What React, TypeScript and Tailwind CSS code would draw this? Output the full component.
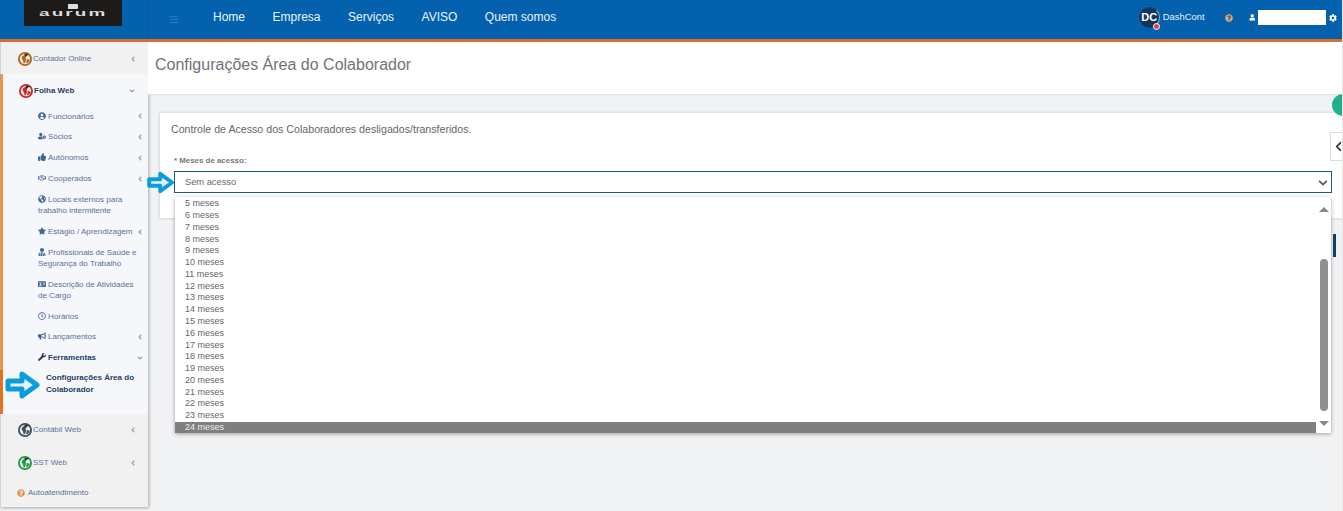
import type { ReactNode } from 'react';
import {
  FaAngleDown,
  FaAngleLeft,
  FaBullhorn,
  FaChevronDown,
  FaChevronLeft,
  FaCog,
  FaGlobeAmericas,
  FaIdCard,
  FaQuestionCircle,
  FaRegClock,
  FaRegHandshake,
  FaStar,
  FaThumbsUp,
  FaUser,
  FaUserCircle,
  FaUserCog,
  FaUserMd,
  FaWrench,
} from 'react-icons/fa';

const navLinks = ['Home', 'Empresa', 'Serviços', 'AVISO', 'Quem somos'];
const months = Array.from({ length: 19 }, (_, i) => i + 5);

const BrandIcon = ({ color }: { color: string }) => (
  <svg viewBox="0 0 20 20" className="mr-px h-[14px] w-[14px] shrink-0">
    <circle cx="10" cy="10" r="8.7" fill="#f6efe6" stroke={color} strokeWidth="2.6" />
    <path d="M5 9c1-4 5-6 9-5-2 1-3 3-3 5 1 3 0 6-3 8 0-3-1-6-3-8z" fill={color} />
    <path d="M12 10l5 1c-1 3-3 5-6 5 1-2 2-4 1-6z" fill={color} />
    <path d="M9 3c2-1 5-1 7 1l-3 1-2 2z" fill="#3a3532" />
  </svg>
);

const FlowArrow = ({ className }: { className: string }) => (
  <svg viewBox="0 0 38 32" className={className}>
    <path
      d="M4 12h14V5l15 11-15 11v-7H4z"
      fill="#e8f3f9"
      stroke="#0a9ddb"
      strokeWidth="5"
      strokeLinejoin="round"
    />
  </svg>
);

const ModuleRow = ({
  icon,
  label,
  open,
  className = 'h-[32px]',
}: {
  icon: string;
  label: string;
  open?: boolean;
  className?: string;
}) => (
  <div className={`flex items-center pl-[17px] pr-[11px] ${className}`}>
    <BrandIcon color={icon} />
    <span className={`text-[8px] ${open ? 'font-bold text-[#1d3f66]' : 'text-[#5a7199]'}`}>{label}</span>
    <span className="ml-auto text-[8px] text-[#9aa0a6]">{open ? <FaAngleDown /> : <FaAngleLeft />}</span>
  </div>
);

const SubRow = ({
  icon,
  children,
  chevron,
  strong,
  tall,
}: {
  icon: ReactNode;
  children: ReactNode;
  chevron?: 'left' | 'down';
  strong?: boolean;
  tall?: boolean;
}) => (
  <div className={`flex items-center pl-[35px] ${tall ? 'h-[32px] pr-[11px]' : 'h-[20.8px] pr-[4px]'}`}>
    <p className={`min-w-0 flex-1 text-[8px] leading-[11.4px] ${strong ? 'font-bold text-[#24405f]' : 'text-[#5a7199]'}`}>
      <span className={`mr-[2px] inline-block align-[-1px] text-[8px] ${strong ? 'text-[#24405f]' : 'text-[#3f6496]'}`}>
        {icon}
      </span>
      {children}
    </p>
    {chevron && (
      <span className="text-[8px] text-[#9aa0a6]">{chevron === 'left' ? <FaAngleLeft /> : <FaAngleDown />}</span>
    )}
  </div>
);

const Sidebar = () => (
  <aside className="flex h-[465px] w-[148px] shrink-0 flex-col border-l border-[#cfd6d4] bg-[#f1f1f2] shadow-[1px_1px_3px_rgba(0,0,0,0.3)]">
    <ModuleRow icon="#b5651d" label="Contador Online" className="h-[32px] pt-[1px]" />
    <section className="relative -ml-px h-[340px] border-l-[3px] border-[#e8954f] bg-[#f6f7fa]">
      <span className="absolute -left-[3px] top-[296px] h-[44px] w-[3px] bg-[#e5701f]" />
      <ModuleRow icon="#c62828" label="Folha Web" open className="-ml-px mr-px h-[32px] pt-[1px]" />
      <SubRow icon={<FaUserCircle />} chevron="left">Funcionários</SubRow>
      <SubRow icon={<FaUserCog />} chevron="left">Sócios</SubRow>
      <SubRow icon={<FaThumbsUp />} chevron="left">Autônomos</SubRow>
      <SubRow icon={<FaRegHandshake />} chevron="left">Cooperados</SubRow>
      <SubRow icon={<FaGlobeAmericas />} tall>
        Locais externos para trabalho intermitente
      </SubRow>
      <SubRow icon={<FaStar />} chevron="left">Estágio / Aprendizagem</SubRow>
      <SubRow icon={<FaUserMd />} tall>
        Profissionais de Saúde e Segurança do Trabalho
      </SubRow>
      <SubRow icon={<FaIdCard />} tall>
        Descrição de Atividades de Cargo
      </SubRow>
      <SubRow icon={<FaRegClock />}>Horários</SubRow>
      <SubRow icon={<FaBullhorn />} chevron="left">Lançamentos</SubRow>
      <SubRow icon={<FaWrench />} chevron="down" strong>
        Ferramentas
      </SubRow>
      <div className="flex h-[32px] items-center pl-[43px] pr-[8px]">
        <p className="text-[8px] font-bold leading-[12px] text-[#24405f]">Configurações Área do Colaborador</p>
      </div>
    </section>
    <ModuleRow icon="#37515f" label="Contábil Web" className="h-[32px]" />
    <ModuleRow icon="#1f9a45" label="SST Web" className="h-[33px] pt-[1px]" />
    <div className="flex h-[28px] items-center gap-[3px] pl-[16px] text-[8px] text-[#5a7199]">
      <FaQuestionCircle className="text-[8px] text-[#e8954f]" />
      Autoatendimento
    </div>
  </aside>
);

const MonthsMenu = () => (
  <div className="absolute left-[175px] top-[197px] flex h-[236px] w-[1156px] bg-white shadow-[0_1px_4px_rgba(0,0,0,0.35)]">
    <ul className="flex min-w-0 flex-1 flex-col justify-end text-[9px] leading-[11.78px] text-[#666]">
      {months.map((m) => (
        <li key={m} className="pl-[10px]">
          {m} meses
        </li>
      ))}
      <li className="h-[11px] bg-[#7f7f7f] pl-[10px] leading-[10px] text-[#eee]">24 meses</li>
    </ul>
    <div className="flex w-[15px] flex-col items-center bg-white pb-[7px] pt-[10px]">
      <span className="h-0 w-0 border-x-[5px] border-b-[5px] border-x-transparent border-b-[#8a8a8a]" />
      <span className="mt-[47px] h-[152px] w-[8px] rounded-full bg-[#8f8f8f]" />
      <span className="mt-auto h-0 w-0 border-x-[5px] border-t-[5px] border-x-transparent border-t-[#8a8a8a]" />
    </div>
  </div>
);

export default function App() {
  return (
    <div className="relative flex h-[511px] w-[1343px] flex-col overflow-hidden border-r border-[#e6e6e6] bg-[#f1f2f4] font-['Liberation_Sans',Arial,sans-serif]">
      <header className="flex h-[42px] shrink-0 border-b-[3px] border-[#dd6f2b] bg-[#0461ad] text-white">
        <div className="flex w-[148px] shrink-0 justify-end border-r border-[#0b5796] pr-[25px]">
          <div className="flex h-[26px] w-[98px] flex-col items-center bg-[#1d1a1a] pt-[4px] text-[#ddd]">
            <span className="h-[5px] w-[10px] rounded-r-[1px] bg-[#ddd]" />
            <span className="mt-[-1px] scale-x-[2.1] text-[9px] font-bold leading-[10px] tracking-[1px]">aurum</span>
          </div>
        </div>
        <div className="flex items-center pb-[5px] pl-[22px]">
          <span className="mt-[4px] flex w-[8px] flex-col gap-[2px]">
            <i className="h-px bg-[#2a7dbf]" />
            <i className="h-px bg-[#2a7dbf]" />
            <i className="h-px bg-[#2a7dbf]" />
          </span>
          <nav className="ml-[35px] flex gap-[27.5px] text-[12px] text-[#eaf4fb]">
            {navLinks.map((link) => (
              <a key={link}>{link}</a>
            ))}
          </nav>
        </div>
        <div className="ml-auto flex items-center pb-[4px] pr-[5px]">
          <div className="relative flex h-[21px] w-[21px] items-center justify-center rounded-full border border-[#1a3d5f] border-r-[#6cc3d8] bg-[#12365a] text-[11px] font-bold">
            DC
            <span className="absolute -bottom-[3px] -right-[1px] h-[7px] w-[7px] rounded-full border border-white bg-[#d64545]" />
          </div>
          <span className="ml-[3px] text-[9.4px] font-medium text-[#e4f1fa]">DashCont</span>
          <FaQuestionCircle className="ml-[20px] text-[8px] text-[#e3a26f]" />
          <FaUser className="ml-[16px] text-[6.5px]" />
          <span className="ml-[3px] h-[15px] w-[68px] bg-white" />
          <FaCog className="ml-[3px] text-[8px]" />
        </div>
      </header>

      <div className="flex min-h-0 flex-1">
        <Sidebar />
        <main className="flex min-w-0 flex-1 flex-col">
          <div className="flex h-[53px] shrink-0 border-b border-[#dfe1e4] bg-white pl-[7px] pt-[13px]">
            <h1 className="text-[16px] leading-[20px] text-[#707478]">Configurações Área do Colaborador</h1>
          </div>
          <section className="ml-[12px] mt-[18px] h-[105px] bg-white pl-[11px] pt-[10px] shadow-[0_0_3px_rgba(0,0,0,0.2)]">
            <p className="text-[10.65px] leading-[13px] text-[#666]">Controle de Acesso dos Colaboradores desligados/transferidos.</p>
            <label className="mt-[20px] block pl-[3px] text-[7.9px] font-bold leading-[10px] text-[#777]">
              * Meses de acesso:
            </label>
            <div className="ml-[3px] mt-[5px] flex h-[22px] w-[1158px] items-center justify-between border border-[#1d5a7c] pl-[10px] pr-[3px] pt-[1px] text-[9.3px] text-[#666]">
              Sem acesso
              <FaChevronDown className="text-[10px] text-[#555]" />
            </div>
          </section>
        </main>
      </div>

      <MonthsMenu />
      <span className="absolute left-[1333px] top-[234px] h-[23px] w-[3px] bg-[#123f66]" />
      <span className="absolute left-[1332px] top-[94px] h-[22px] w-[22px] rounded-full bg-[#1fb08c]" />
      <span className="absolute left-[1330px] top-[132px] flex h-[29px] w-[14px] items-center justify-end border border-r-0 border-[#dcdcdc] bg-white text-[11px] text-[#333]">
        <FaChevronLeft />
      </span>
      <FlowArrow className="absolute left-[146px] top-[169px] h-[27px] w-[30px]" />
      <FlowArrow className="absolute left-[4px] top-[369px] h-[32px] w-[38px]" />
    </div>
  );
}
